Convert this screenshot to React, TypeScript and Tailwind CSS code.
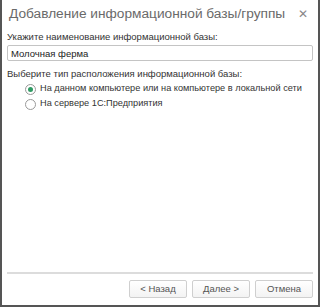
import { useState } from 'react';

const FONT = { fontFamily: '"Liberation Sans", Arial, sans-serif' };

function Radio({ checked, label, onClick }: { checked: boolean; label: string; onClick: () => void }) {
  return (
    <button onClick={onClick} className="flex items-center gap-[4px] h-[14px] text-left whitespace-nowrap">
      <span className="w-[11px] h-[11px] rounded-full border border-[#9a9a9a] bg-white flex items-center justify-center shrink-0">
        {checked && <span className="w-[5px] h-[5px] rounded-full bg-[#2f9a63]" />}
      </span>
      <span className="text-[9.2px] text-[#333]">{label}</span>
    </button>
  );
}

function Btn({ children }: { children: React.ReactNode }) {
  return (
    <button className="w-[58px] h-[18px] rounded-[2px] border border-[#cfcfcf] bg-gradient-to-b from-white to-[#f3f3f3] text-[9.5px] text-[#555] leading-none">
      {children}
    </button>
  );
}

export default function App() {
  const [mode, setMode] = useState(0);
  const [name, setName] = useState('Молочная ферма');

  return (
    <div
      className="w-[320px] h-[307px] bg-white border-l-2 border-r-2 border-b-2 border-[#555] flex flex-col"
      style={FONT}
    >
      {/* Title bar */}
      <div className="flex items-center justify-between h-[28px] pl-[7px] pr-[10px]">
        <span className="text-[13.7px] text-[#6a6a6a] whitespace-nowrap">Добавление информационной базы/группы</span>
        <span className="text-[#888] text-[12px] leading-none">✕</span>
      </div>

      <div className="px-[5px] flex flex-col flex-1">
        <div className="text-[9.5px] text-[#333] mt-[3px] leading-[12px] whitespace-nowrap">Укажите наименование информационной базы:</div>
        <input
          value={name}
          onChange={e => setName(e.target.value)}
          className="mt-[2px] h-[16px] w-full border border-[#c4c4c4] rounded-[2px] px-[3px] text-[9.5px] text-[#222] outline-none"
        />
        <div className="text-[9.5px] text-[#333] mt-[7px] leading-[12px] whitespace-nowrap">Выберите тип расположения информационной базы:</div>
        <div className="flex flex-col gap-[1px] mt-[2px] pl-[18px]">
          <Radio checked={mode === 0} label="На данном компьютере или на компьютере в локальной сети" onClick={() => setMode(0)} />
          <Radio checked={mode === 1} label="На сервере 1С:Предприятия" onClick={() => setMode(1)} />
        </div>

        <div className="flex-1" />
        <div className="h-[2px] bg-[#dcdcdc]" />
        <div className="flex justify-end gap-[5px] mt-[6px] mb-[7px]">
          <Btn>&lt; Назад</Btn>
          <Btn>Далее &gt;</Btn>
          <Btn>Отмена</Btn>
        </div>
      </div>
    </div>
  );
}
